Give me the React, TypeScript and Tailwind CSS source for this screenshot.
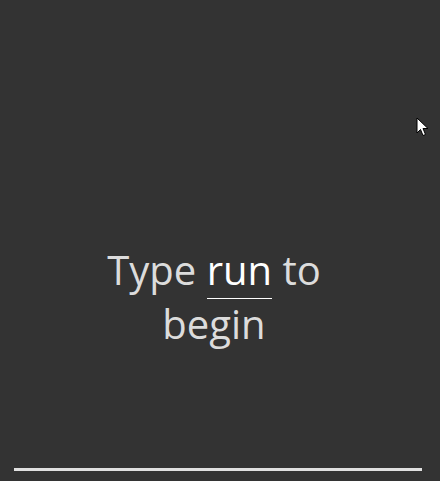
import React from 'react';

const Pointer = () => (
  <svg className="absolute left-[416px] top-[117px]" width="13" height="20" viewBox="0 0 13 20">
    <path d="M1 1 L1 16 L4.5 12.5 L7 18.5 L9.5 17.5 L7 11.5 L12 11.5 Z" fill="#fff" stroke="#000" strokeWidth="1" strokeLinejoin="miter" />
  </svg>
);

export default function App() {
  return (
    <div className="relative flex h-[481px] w-[440px] flex-col bg-[#333333] font-['Open_Sans',sans-serif]">
      <div className="flex flex-1 items-center justify-center pr-[12px] pt-[126px]">
        <p className="w-[250px] text-center text-[40px] leading-[54px] text-[#dcdcdc]">
          Type <span className="border-b border-white pb-[1px] text-white">run</span> to begin
        </p>
      </div>
      <div className="mb-[10px] ml-[14px] mr-[18px] h-[3px] bg-[#e0e0e0]" />
      <Pointer />
    </div>
  );
}
